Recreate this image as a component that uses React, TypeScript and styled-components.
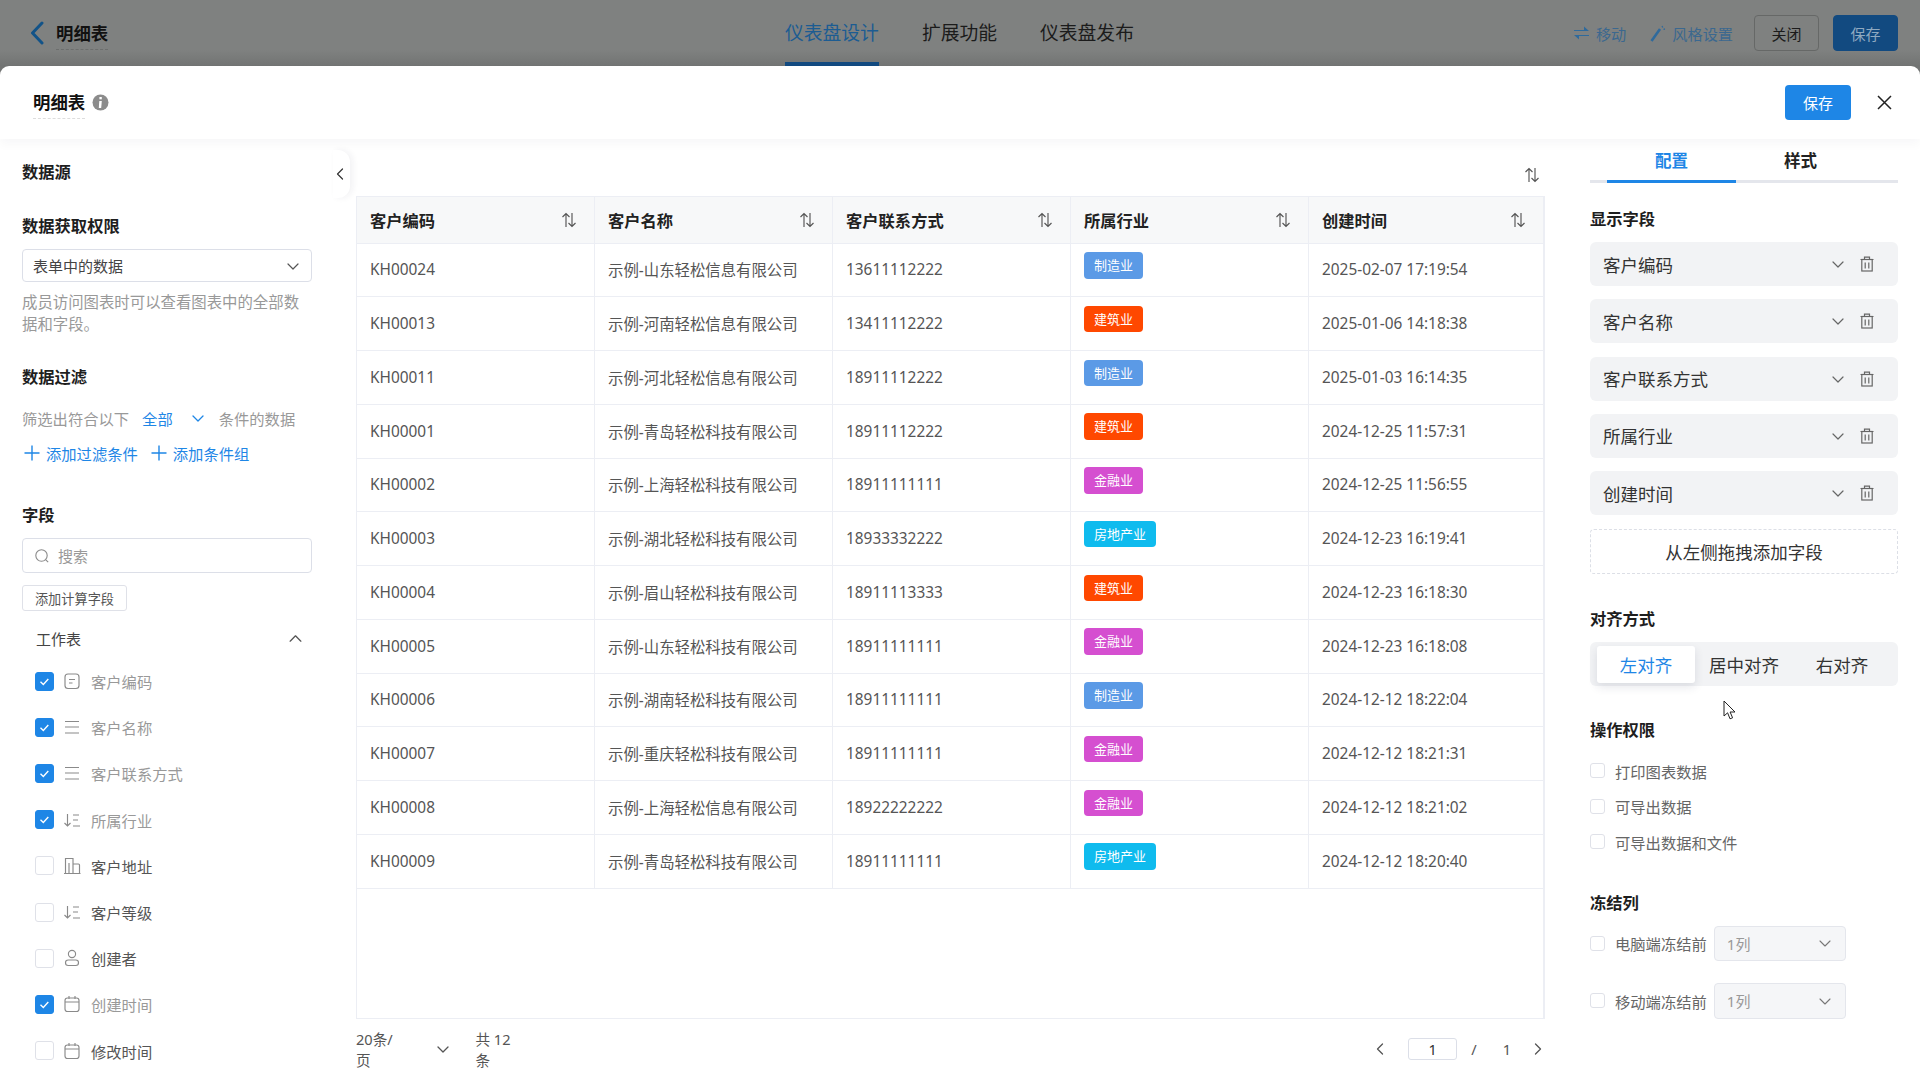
import React from "react";
import styled, { createGlobalStyle } from "styled-components";

const FONT = `"Noto Sans", "Noto Sans CJK SC", sans-serif`;
const BLUE = "#1e86e6";

const Global = createGlobalStyle`
  html, body { margin: 0; padding: 0; background: #fff; overflow: hidden; }
  * { box-sizing: border-box; }
  body { font-family: ${FONT}; font-size: 15.4px; color: #555; }
`;

const Page = styled.div`
  position: relative;
  width: 1920px;
  height: 1079px;
  overflow: hidden;
  display: flex;
  flex-direction: column;
  background: linear-gradient(#7f8180 0, #7f8180 50px, #727473 66px);
`;

/* Top bar (dimmed behind the modal) */
const TopBar = styled.header`
  height: 66px;
  flex: none;
  display: flex;
  align-items: center;
  padding: 0 22px 0 30px;
  position: relative;
`;
const BackTitle = styled.div`
  display: flex;
  align-items: center;
  gap: 12px;
  width: 755px;
`;
const DottedTitle = styled.span`
  font-size: 17.4px;
  font-weight: 700;
  line-height: 24px;
  color: #111;
  padding-bottom: 4px;
  margin-top: 4px;
  border-bottom: 1px dashed ${(p: { $light?: boolean }) => (p.$light ? "#ddd" : "#6c6e6d")};
`;
const NavTabs = styled.nav`
  display: flex;
  gap: 43px;
  height: 66px;
`;
const NavTab = styled.div<{ $active?: boolean }>`
  font-size: 18.8px;
  line-height: 66px;
  color: ${(p) => (p.$active ? "#1c5c92" : "#1b1b1b")};
  box-shadow: ${(p) => (p.$active ? "inset 0 -4px 0 #124a80" : "none")};
`;
const TopActions = styled.div`
  margin-left: auto;
  display: flex;
  align-items: center;
`;
const TopLink = styled.span`
  display: flex;
  align-items: center;
  gap: 6px;
  font-size: 15.2px;
  color: #3b688f;
  margin-right: 24px;
`;
const TopButton = styled.div<{ $primary?: boolean }>`
  width: 65px;
  height: 36px;
  border-radius: 4px;
  display: flex;
  align-items: center;
  justify-content: center;
  font-size: 15px;
  margin-left: ${(p) => (p.$primary ? "14px" : "-3px")};
  color: ${(p) => (p.$primary ? "#8fa9c0" : "#1b1b1b")};
  background: ${(p) => (p.$primary ? "#124a80" : "transparent")};
  border: 1px solid ${(p) => (p.$primary ? "#124a80" : "#666867")};
`;

/* Modal */
const Modal = styled.section`
  flex: 1;
  background: #fff;
  border-radius: 9px 9px 0 0;
  display: flex;
  flex-direction: column;
  min-height: 0;
`;
const ModalHeader = styled.div`
  height: 73px;
  flex: none;
  display: flex;
  align-items: center;
  padding: 0 28px 0 33px;
  box-shadow: 0 5px 10px rgba(30, 40, 70, 0.035);
  position: relative;
  z-index: 2;
`;
const TitleWrap = styled.div`
  display: flex;
  align-items: center;
  gap: 7px;
`;
const SaveButton = styled.button`
  margin-left: auto;
  width: 66px;
  height: 35px;
  border: 0;
  border-radius: 4px;
  background: ${BLUE};
  color: #fff;
  font: 400 15px ${FONT};
`;
const CloseBtn = styled.span`
  display: flex;
  margin-left: 26px;
  color: #222;
`;
const ModalBody = styled.div`
  flex: 1;
  display: flex;
  min-height: 0;
`;

const SectionTitle = styled.h3<{ $mt?: number }>`
  margin: ${(p) => p.$mt ?? 0}px 0 0;
  font-size: 16.3px;
  line-height: 24px;
  font-weight: 700;
  color: #1e1e1e;
`;

/* Left panel */
const LeftPanel = styled.aside`
  width: 356px;
  flex: none;
  padding: 21px 44px 0 22px;
  position: relative;
`;
const Handle = styled.div`
  position: absolute;
  left: 333px;
  top: 11px;
  width: 17px;
  height: 48px;
  background: #fff;
  border-radius: 0 12px 12px 0;
  box-shadow: 3px 0 6px rgba(30, 40, 70, 0.06);
  display: flex;
  align-items: center;
  color: #333;
`;
const SelectBox = styled.div`
  margin-top: 11px;
  height: 33px;
  border: 1px solid #dcdfe8;
  border-radius: 4px;
  display: flex;
  align-items: center;
  justify-content: space-between;
  padding: 0 11px 0 10px;
  font-size: 15px;
  color: #444;
`;
const Desc = styled.p`
  margin: 10px 0 0;
  font-size: 15.4px;
  line-height: 22px;
  color: #999;
`;
const FilterLine = styled.div`
  margin-top: 17px;
  height: 24px;
  display: flex;
  align-items: center;
  font-size: 15.3px;
  color: #999;
  white-space: nowrap;
`;
const BlueText = styled.span<{ $ml?: number }>`
  color: ${BLUE};
  margin-left: ${(p) => p.$ml ?? 0}px;
  display: inline-flex;
  align-items: center;
`;
const AddLine = styled.div`
  margin-top: 11px;
  height: 24px;
  display: flex;
  align-items: center;
  gap: 11px;
  font-size: 15.3px;
  white-space: nowrap;
`;
const AddLink = styled.span`
  display: inline-flex;
  align-items: center;
  gap: 6px;
  color: ${BLUE};
  padding-left: 2px;
`;
const SearchBox = styled.div`
  margin-top: 11px;
  height: 35px;
  border: 1px solid #dcdfe8;
  border-radius: 4px;
  display: flex;
  align-items: center;
  gap: 9px;
  padding-left: 12px;
  font-size: 15px;
  color: #999;
`;
const CalcButton = styled.div`
  margin-top: 12px;
  width: 105px;
  height: 26px;
  border: 1px solid #dfe1e8;
  border-radius: 3px;
  display: flex;
  align-items: center;
  justify-content: center;
  font-size: 13.2px;
  color: #555;
`;
const GroupHead = styled.div`
  margin-top: 15px;
  height: 24px;
  padding: 0 9px 0 14px;
  display: flex;
  align-items: center;
  justify-content: space-between;
  font-size: 15px;
  color: #444;
`;
const FieldList = styled.div`
  margin-top: 8px;
  padding-left: 13px;
`;
const FieldItem = styled.div<{ $on?: boolean }>`
  height: 46.2px;
  display: flex;
  align-items: center;
  font-size: 15.3px;
  color: ${(p) => (p.$on ? "#999" : "#555")};
`;
const Check = styled.span<{ $on?: boolean; $size?: number }>`
  width: ${(p) => p.$size ?? 19}px;
  height: ${(p) => p.$size ?? 19}px;
  flex: none;
  display: flex;
  align-items: center;
  justify-content: center;
  border-radius: 3px;
  background: ${(p) => (p.$on ? BLUE : "#fff")};
  border: 1px solid ${(p) => (p.$on ? BLUE : "#dfe1e8")};
`;
const TypeIcon = styled.span`
  width: 18px;
  height: 18px;
  margin: 0 10px 0 9px;
  display: flex;
  color: #8a8a8a;
`;

/* Center */
const Center = styled.main`
  width: 1189px;
  flex: none;
`;
const TableTool = styled.div`
  height: 57px;
  display: flex;
  justify-content: flex-end;
  align-items: flex-end;
  padding: 0 0 13px;
  color: #555;
`;
const TableFrame = styled.div`
  height: 823px;
  border: 1px solid #eceef4;
  border-right-width: 2px;
`;
const Row = styled.div<{ $head?: boolean }>`
  display: grid;
  grid-template-columns: 238px 238px 238px 238px 1fr;
  height: ${(p) => (p.$head ? "46.5px" : "53.75px")};
  border-bottom: 1px solid #eceef4;
  background: ${(p) => (p.$head ? "#f7f8f9" : "#fff")};
`;
const Cell = styled.div<{ $head?: boolean }>`
  padding: 0 12px 0 13px;
  display: flex;
  align-items: center;
  justify-content: space-between;
  font-size: ${(p) => (p.$head ? "16.3px" : "15.4px")};
  font-weight: ${(p) => (p.$head ? 700 : 400)};
  color: ${(p) => (p.$head ? "#222" : "#555")};
  border-right: 1px solid #eceef4;
  white-space: nowrap;
  &:last-child { border-right: 0; }
`;
const SortIcon = styled.span`
  display: flex;
  color: #555;
  margin-right: 5px;
`;
const Tag = styled.span<{ $color: string }>`
  display: inline-block;
  height: 26.5px;
  line-height: 26.5px;
  padding: 0 10px;
  margin-top: -9px;
  border-radius: 4px;
  font-size: 13px;
  color: #fff;
  background: ${(p) => p.$color};
`;
const Pager = styled.div`
  margin-top: 18px;
  height: 24px;
  display: flex;
  align-items: center;
  font-size: 14.6px;
  color: #555;
`;
const PagerText = styled.span<{ $ml?: number; $w?: number }>`
  margin-left: ${(p) => p.$ml ?? 0}px;
  ${(p) => (p.$w ? `width:${p.$w}px;text-align:center;` : "")}
  display: inline-flex;
  align-items: center;
  justify-content: ${(p) => (p.$w ? "center" : "flex-start")};
`;
const PagerInput = styled.span`
  margin-left: 21px;
  width: 51px;
  height: 22px;
  border: 1px solid #dcdfe8;
  border-radius: 3px;
  display: flex;
  align-items: center;
  justify-content: center;
  color: #333;
`;

/* Right */
const RightPanel = styled.aside`
  width: 308px;
  margin-left: 45px;
  flex: none;
`;
const CfgTabs = styled.div`
  height: 44px;
  display: flex;
  padding: 0 17px;
  border-bottom: 3px solid #e4e6ec;
`;
const CfgTab = styled.div<{ $active?: boolean }>`
  width: 129px;
  height: 44px;
  padding-top: 10px;
  text-align: center;
  font-size: 16.5px;
  line-height: 24px;
  font-weight: 700;
  color: ${(p) => (p.$active ? BLUE : "#222")};
  border-bottom: 3px solid ${(p) => (p.$active ? BLUE : "transparent")};
`;
const ShownList = styled.div`
  margin-top: 11px;
  display: flex;
  flex-direction: column;
  gap: 13.25px;
`;
const ShownRow = styled.div`
  height: 44px;
  background: #f2f3f5;
  border-radius: 6px;
  display: flex;
  align-items: center;
  padding: 0 23px 0 13px;
  font-size: 17.5px;
  color: #333;
`;
const RowIcon = styled.span<{ $first?: boolean }>`
  display: flex;
  color: #666;
  margin-left: ${(p) => (p.$first ? "auto" : "14px")};
`;
const DropHint = styled.div`
  margin-top: 13.5px;
  height: 45px;
  border: 1px dashed #dcdfe6;
  border-radius: 4px;
  display: flex;
  align-items: center;
  justify-content: center;
  font-size: 17.5px;
  color: #333;
`;
const Segment = styled.div`
  margin-top: 11px;
  height: 44px;
  padding: 4px 7px;
  background: #f2f3f5;
  border-radius: 6px;
  display: flex;
`;
const SegItem = styled.div<{ $active?: boolean }>`
  width: 98px;
  height: 37px;
  border-radius: 3px;
  display: flex;
  align-items: center;
  justify-content: center;
  font-size: 17.5px;
  color: ${(p) => (p.$active ? BLUE : "#333")};
  background: ${(p) => (p.$active ? "#fff" : "transparent")};
  box-shadow: ${(p) => (p.$active ? "0 4px 10px rgba(40,50,80,.12)" : "none")};
`;
const PermList = styled.div`
  margin-top: 17px;
  display: flex;
  flex-direction: column;
  gap: 11.5px;
`;
const CheckRow = styled.div`
  height: 24px;
  display: flex;
  align-items: center;
  gap: 10px;
  font-size: 15.3px;
  color: #666;
`;
const FreezeRow = styled.div<{ $mt: number; $h: number }>`
  margin-top: ${(p) => p.$mt}px;
  height: ${(p) => p.$h}px;
  display: flex;
  align-items: center;
  gap: 10px;
  font-size: 15.3px;
  color: #666;
`;
const FreezeSelect = styled.div`
  margin-left: -3px;
  width: 132px;
  height: 100%;
  background: #f5f6f8;
  border: 1px solid #e4e6ec;
  border-radius: 4px;
  display: flex;
  align-items: center;
  justify-content: space-between;
  padding: 0 13px 0 12px;
  color: #999;
  font-size: 15px;
`;
const Cursor = styled.svg`
  position: absolute;
  left: 1723px;
  top: 700px;
`;

/* Icons */
const Chevron = ({ dir = "down", size = 14, w = 1.3, color = "currentColor" }: { dir?: string; size?: number; w?: number; color?: string }) => {
  const d: Record<string, string> = {
    down: "M2 5l5 5 5-5",
    up: "M2 9.5l5-5 5 5",
    left: "M9.5 2l-5 5 5 5",
    right: "M4.5 2l5 5-5 5",
  };
  return (
    <svg width={size} height={size} viewBox="0 0 14 14" fill="none" stroke={color} strokeWidth={w} strokeLinecap="round" strokeLinejoin="round">
      <path d={d[dir]} />
    </svg>
  );
};
const SortArrows = ({ size = 16 }: { size?: number }) => (
  <svg width={size} height={size} viewBox="0 0 16 16" fill="none" stroke="currentColor" strokeWidth="1.15">
    <path d="M5 15V1.5M1.5 5L5 1.5 8.5 5" />
    <path d="M11 1v13.5M7.5 11l3.5 3.5 3.5-3.5" />
  </svg>
);
const Trash = () => (
  <svg width="16" height="16" viewBox="0 0 16 16" fill="none" stroke="currentColor" strokeWidth="1.2">
    <path d="M1.5 3.5h13M5.5 3.5V1.2h5v2.3" />
    <rect x="2.8" y="3.5" width="10.4" height="11.5" />
    <path d="M6.2 6.5v6M9.8 6.5v6" />
  </svg>
);
const Plus = ({ size = 16 }: { size?: number }) => (
  <svg width={size} height={size} viewBox="0 0 16 16" stroke={BLUE} strokeWidth="1.4">
    <path d="M8 .5v15M.5 8h15" />
  </svg>
);
const Tick = () => (
  <svg width="11" height="11" viewBox="0 0 11 11" fill="none" stroke="#fff" strokeWidth="1.4">
    <path d="M1.5 5.8l2.8 2.6 5-5.4" />
  </svg>
);
const Info = () => (
  <svg width="17" height="17" viewBox="0 0 17 17">
    <circle cx="8.5" cy="8.5" r="8" fill="#8c8c8c" />
    <rect x="7.4" y="3" width="2.4" height="2.3" fill="#fff" />
    <path d="M7.3 7h2.5l-.6 7H6.8z" fill="#fff" />
  </svg>
);
const iconPaths: Record<string, React.ReactNode> = {
  code: (
    <>
      <rect x="2" y="2" width="14" height="14.5" rx="3" />
      <path d="M6 7.5h6M6 11h3.5" />
    </>
  ),
  text: <path d="M2 3.5h14M2 9h14M2 15h14" />,
  sort: (
    <>
      <path d="M4.5 3v12M1.5 12l3 3 3-3" />
      <path d="M10 4h6M10 9h5M10 15h7" />
    </>
  ),
  building: <path d="M1 16.5h16.5M2.5 16.5V1.5h7.5v15M10 7h5.5c.8 0 1 .5 1 1v8.5M6 16.5V6" />,
  user: (
    <>
      <circle cx="9" cy="5" r="3.6" />
      <rect x="2.5" y="11" width="13" height="5.5" rx="2.75" />
    </>
  ),
  date: (
    <>
      <rect x="2" y="3" width="14" height="13.5" rx="2.5" />
      <path d="M2 7h14M6 1v3M12 1v3" />
    </>
  ),
};
const FieldType = ({ kind }: { kind: string }) => (
  <TypeIcon>
    <svg width="18" height="18" viewBox="0 0 18 18" fill="none" stroke="currentColor" strokeWidth="1.15">
      {iconPaths[kind]}
    </svg>
  </TypeIcon>
);

const fields = [
  ["客户编码", "code", true],
  ["客户名称", "text", true],
  ["客户联系方式", "text", true],
  ["所属行业", "sort", true],
  ["客户地址", "building", false],
  ["客户等级", "sort", false],
  ["创建者", "user", false],
  ["创建时间", "date", true],
  ["修改时间", "date", false],
] as const;

const tagColors: Record<string, string> = {
  制造业: "#5b9ae6",
  建筑业: "#ff4800",
  金融业: "#d54fd0",
  房地产业: "#0fbbee",
};
const rows = [
  ["KH00024", "示例-山东轻松信息有限公司", "13611112222", "制造业", "2025-02-07 17:19:54"],
  ["KH00013", "示例-河南轻松信息有限公司", "13411112222", "建筑业", "2025-01-06 14:18:38"],
  ["KH00011", "示例-河北轻松信息有限公司", "18911112222", "制造业", "2025-01-03 16:14:35"],
  ["KH00001", "示例-青岛轻松科技有限公司", "18911112222", "建筑业", "2024-12-25 11:57:31"],
  ["KH00002", "示例-上海轻松科技有限公司", "18911111111", "金融业", "2024-12-25 11:56:55"],
  ["KH00003", "示例-湖北轻松科技有限公司", "18933332222", "房地产业", "2024-12-23 16:19:41"],
  ["KH00004", "示例-眉山轻松科技有限公司", "18911113333", "建筑业", "2024-12-23 16:18:30"],
  ["KH00005", "示例-山东轻松科技有限公司", "18911111111", "金融业", "2024-12-23 16:18:08"],
  ["KH00006", "示例-湖南轻松科技有限公司", "18911111111", "制造业", "2024-12-12 18:22:04"],
  ["KH00007", "示例-重庆轻松科技有限公司", "18911111111", "金融业", "2024-12-12 18:21:31"],
  ["KH00008", "示例-上海轻松信息有限公司", "18922222222", "金融业", "2024-12-12 18:21:02"],
  ["KH00009", "示例-青岛轻松科技有限公司", "18911111111", "房地产业", "2024-12-12 18:20:40"],
];
const heads = ["客户编码", "客户名称", "客户联系方式", "所属行业", "创建时间"];
const shown = ["客户编码", "客户名称", "客户联系方式", "所属行业", "创建时间"];

export default function App() {
  return (
    <Page>
      <Global />
      <TopBar>
        <BackTitle>
          <svg width="14" height="24" viewBox="0 0 14 24" fill="none" stroke="#125388" strokeWidth="3" strokeLinecap="round" strokeLinejoin="round">
            <path d="M12 2L2.5 12 12 22" />
          </svg>
          <DottedTitle>明细表</DottedTitle>
        </BackTitle>
        <NavTabs>
          <NavTab $active>仪表盘设计</NavTab>
          <NavTab>扩展功能</NavTab>
          <NavTab>仪表盘发布</NavTab>
        </NavTabs>
        <TopActions>
          <TopLink>
            <svg width="17" height="17" viewBox="0 0 17 17" fill="#2f6a9c">
              <path d="M1 5h10V1.5L16 6H1zM16 11H6v3.5L1 10h15z" />
            </svg>
            移动
          </TopLink>
          <TopLink>
            <svg width="16" height="17" viewBox="0 0 16 17" fill="none" stroke="#2f6a9c" strokeWidth="2.6">
              <path d="M1.5 16L10 4" />
              <path d="M12 1l.8 1.5M15 4l-1.5.3" strokeWidth="1.3" />
            </svg>
            风格设置
          </TopLink>
          <TopButton>关闭</TopButton>
          <TopButton $primary>保存</TopButton>
        </TopActions>
      </TopBar>

      <Modal>
        <ModalHeader>
          <TitleWrap>
            <DottedTitle $light>明细表</DottedTitle>
            <Info />
          </TitleWrap>
          <SaveButton>保存</SaveButton>
          <CloseBtn>
            <svg width="15" height="15" viewBox="0 0 15 15" stroke="currentColor" strokeWidth="1.5">
              <path d="M1 1l13 13M14 1L1 14" />
            </svg>
          </CloseBtn>
        </ModalHeader>

        <ModalBody>
          <LeftPanel>
            <Handle>
              <Chevron dir="left" size={14} w={1.2} />
            </Handle>
            <SectionTitle>数据源</SectionTitle>
            <SectionTitle $mt={30}>数据获取权限</SectionTitle>
            <SelectBox>
              表单中的数据
              <Chevron size={14} color="#555" w={1.2} />
            </SelectBox>
            <Desc>成员访问图表时可以查看图表中的全部数据和字段。</Desc>
            <SectionTitle $mt={29}>数据过滤</SectionTitle>
            <FilterLine>
              筛选出符合以下
              <BlueText $ml={13}>全部</BlueText>
              <BlueText $ml={18}>
                <Chevron size={14} />
              </BlueText>
              <PagerText $ml={14}>条件的数据</PagerText>
            </FilterLine>
            <AddLine>
              <AddLink>
                <Plus />
                添加过滤条件
              </AddLink>
              <AddLink>
                <Plus />
                添加条件组
              </AddLink>
            </AddLine>
            <SectionTitle $mt={38}>字段</SectionTitle>
            <SearchBox>
              <svg width="14" height="14" viewBox="0 0 14 14" fill="none" stroke="#8a8a8a" strokeWidth="1.1">
                <circle cx="6.5" cy="6.5" r="5.7" />
                <path d="M10.8 10.8l2.4 2.4" />
              </svg>
              搜索
            </SearchBox>
            <CalcButton>添加计算字段</CalcButton>
            <GroupHead>
              工作表
              <Chevron dir="up" size={15} color="#555" w={1.2} />
            </GroupHead>
            <FieldList>
              {fields.map(([name, kind, on]) => (
                <FieldItem key={name} $on={on}>
                  <Check $on={on}>{on && <Tick />}</Check>
                  <FieldType kind={kind} />
                  {name}
                </FieldItem>
              ))}
            </FieldList>
          </LeftPanel>

          <Center>
            <TableTool>
              <SortIcon>
                <SortArrows />
              </SortIcon>
            </TableTool>
            <TableFrame>
              <Row $head>
                {heads.map((h) => (
                  <Cell key={h} $head>
                    {h}
                    <SortIcon>
                      <SortArrows />
                    </SortIcon>
                  </Cell>
                ))}
              </Row>
              {rows.map((r) => (
                <Row key={r[0]}>
                  <Cell>{r[0]}</Cell>
                  <Cell>{r[1]}</Cell>
                  <Cell>{r[2]}</Cell>
                  <Cell>
                    <Tag $color={tagColors[r[3]]}>{r[3]}</Tag>
                  </Cell>
                  <Cell>{r[4]}</Cell>
                </Row>
              ))}
            </TableFrame>
            <Pager>
              20条/页
              <PagerText $ml={31}>
                <Chevron size={14} />
              </PagerText>
              <PagerText $ml={25}>共 12 条</PagerText>
              <PagerText $ml={846}>
                <Chevron dir="left" size={14} />
              </PagerText>
              <PagerInput>1</PagerInput>
              <PagerText $ml={14}>/</PagerText>
              <PagerText $ml={26}>1</PagerText>
              <PagerText $ml={20}>
                <Chevron dir="right" size={14} />
              </PagerText>
            </Pager>
          </Center>

          <RightPanel>
            <CfgTabs>
              <CfgTab $active>配置</CfgTab>
              <CfgTab>样式</CfgTab>
            </CfgTabs>
            <SectionTitle $mt={24}>显示字段</SectionTitle>
            <ShownList>
              {shown.map((s) => (
                <ShownRow key={s}>
                  {s}
                  <RowIcon $first>
                    <Chevron size={14} w={1.2} />
                  </RowIcon>
                  <RowIcon>
                    <Trash />
                  </RowIcon>
                </ShownRow>
              ))}
            </ShownList>
            <DropHint>从左侧拖拽添加字段</DropHint>
            <SectionTitle $mt={33}>对齐方式</SectionTitle>
            <Segment>
              <SegItem $active>左对齐</SegItem>
              <SegItem>居中对齐</SegItem>
              <SegItem>右对齐</SegItem>
            </Segment>
            <SectionTitle $mt={32}>操作权限</SectionTitle>
            <PermList>
              <CheckRow>
                <Check $size={15} />
                打印图表数据
              </CheckRow>
              <CheckRow>
                <Check $size={15} />
                可导出数据
              </CheckRow>
              <CheckRow>
                <Check $size={15} />
                可导出数据和文件
              </CheckRow>
            </PermList>
            <SectionTitle $mt={37}>冻结列</SectionTitle>
            <FreezeRow $mt={11} $h={35}>
              <Check $size={15} />
              电脑端冻结前
              <FreezeSelect>
                1列
                <Chevron size={14} color="#777" w={1.1} />
              </FreezeSelect>
            </FreezeRow>
            <FreezeRow $mt={22} $h={36}>
              <Check $size={15} />
              移动端冻结前
              <FreezeSelect>
                1列
                <Chevron size={14} color="#777" w={1.1} />
              </FreezeSelect>
            </FreezeRow>
          </RightPanel>
        </ModalBody>
      </Modal>
      <Cursor width="14" height="21" viewBox="0 0 14 21">
        <path d="M1 1v15l3.6-3.2 2.4 6 2.6-1-2.5-5.8H12z" fill="#fff" stroke="#222" strokeWidth="1" strokeLinejoin="round" />
      </Cursor>
    </Page>
  );
}
